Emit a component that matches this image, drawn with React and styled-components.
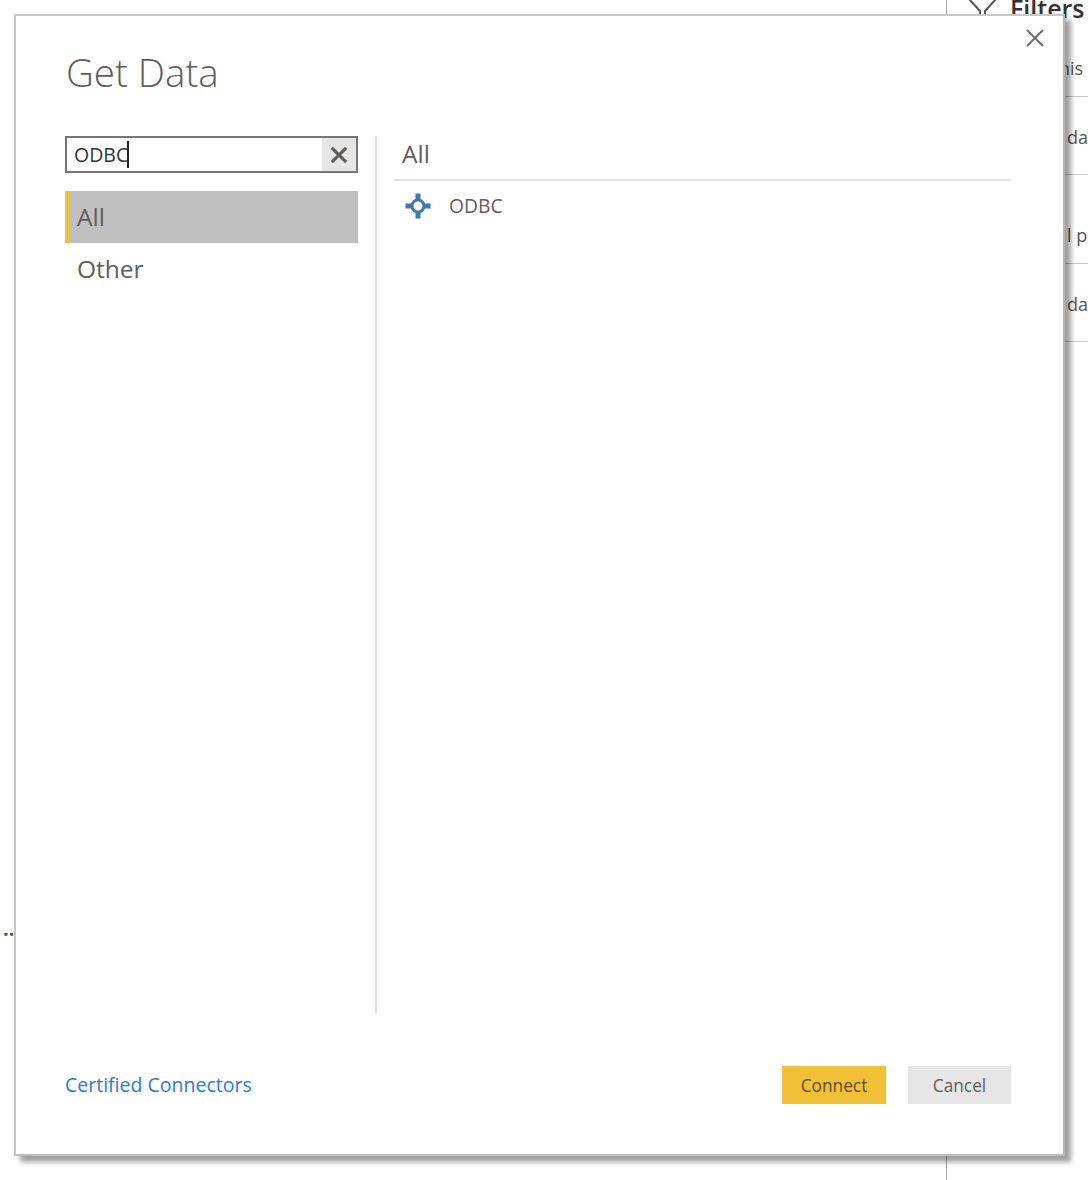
import React from 'react';
import styled, { createGlobalStyle } from 'styled-components';

const GlobalStyle = createGlobalStyle`
  html, body {
    margin: 0;
    padding: 0;
    background: #fff;
  }
  body {
    font-family: "Open Sans", "Noto Sans", "Liberation Sans", sans-serif;
  }
`;

const Page = styled.div`
  position: relative;
  width: 1088px;
  height: 1180px;
  overflow: hidden;
  background: #fff;
  display: flex;
  justify-content: flex-end;
`;

/* report pane that shows behind the dialog */
const FiltersPane = styled.aside`
  width: 141px;
  border-left: 1px solid #a8a8a8;
  color: #444;
`;

const FiltersHeader = styled.div`
  height: 14px;
  display: flex;
  align-items: flex-start;
  gap: 13px;
  padding-left: 21px;
  font-size: 25px;
  font-weight: 600;
  line-height: 20px;
  color: #333;

  svg {
    flex: none;
    margin-top: -2px;
  }
  span {
    margin-top: -2px;
  }
`;

const PaneRow = styled.div`
  height: ${p => p.$height}px;
  box-sizing: border-box;
  border-bottom: 1px solid #c8c8c8;
  padding-left: ${p => p.$left}px;
  padding-bottom: ${p => p.$bottom}px;
  display: flex;
  align-items: flex-end;
  font-size: 18px;
  line-height: 24px;
  color: #555;
  white-space: nowrap;
`;

const MoreDots = styled.span`
  position: absolute;
  left: 3px;
  top: 917px;
  font-size: 20px;
  line-height: 24px;
  font-weight: 700;
  color: #555;
`;

const Dialog = styled.div`
  position: absolute;
  left: 14px;
  top: 14px;
  width: 1051px;
  height: 1142px;
  box-sizing: border-box;
  border: 2px solid #c9c7c5;
  border-right-color: #b4b4b4;
  border-bottom-color: #bdbdbd;
  background: #fff;
  box-shadow: 6px 6px 5px rgba(0, 0, 0, 0.38);
  padding: 0 52px 0 49px;
  display: flex;
  flex-direction: column;
  color: #605e5c;
`;

const CloseButton = styled.button`
  position: absolute;
  right: 17px;
  top: 11px;
  width: 22px;
  height: 22px;
  padding: 0;
  border: 0;
  background: none;
  color: #6e6e6e;
  display: flex;
  align-items: center;
  justify-content: center;
`;

const Title = styled.h1`
  margin: 0;
  padding: 29px 0 0 1px;
  height: 90px;
  box-sizing: border-box;
  font-size: 38.5px;
  line-height: 54px;
  font-weight: 300;
  color: #605e5c;
`;

const Body = styled.div`
  height: 878px;
  margin-top: 30px;
  display: grid;
  grid-template-columns: 312px 1fr;
`;

const Sidebar = styled.div`
  padding-right: 17px;
  border-right: 2px solid #e1e1e1;
`;

const SearchBox = styled.div`
  height: 37px;
  box-sizing: border-box;
  border: 2px solid #757575;
  display: flex;
  align-items: stretch;
  margin-bottom: 18px;
`;

const SearchValue = styled.div`
  flex: 1;
  padding-left: 7px;
  font-size: 19.5px;
  line-height: 33px;
  color: #333;
  display: flex;
  align-items: center;
`;

const Caret = styled.i`
  display: block;
  width: 2px;
  height: 27px;
  margin-left: -1px;
  background: #222;
`;

const ClearButton = styled.button`
  width: 34px;
  padding: 0;
  border: 0;
  background: #e6e6e6;
  color: #605e5c;
  display: flex;
  align-items: center;
  justify-content: center;
`;

const Category = styled.div`
  height: 52px;
  box-sizing: border-box;
  padding-left: ${p => (p.$active ? 8 : 12)}px;
  border-left: ${p => (p.$active ? '4px solid #f2c037' : '0')};
  background: ${p => (p.$active ? '#bfbfbf' : 'transparent')};
  font-size: 24.5px;
  line-height: 52px;
  color: #605e5c;
`;

const Results = styled.div`
  margin-left: 17px;
`;

const ResultsHeader = styled.div`
  height: 45px;
  box-sizing: border-box;
  border-bottom: 2px solid #e1e1e1;
  padding-left: 8px;
  font-size: 24.5px;
  line-height: 36px;
  color: #605e5c;
`;

const ResultRow = styled.div`
  height: 49px;
  display: flex;
  align-items: center;
  gap: 17px;
  padding-left: 10px;
  font-size: 19.3px;
  color: #605e5c;
`;

const Footer = styled.div`
  margin-top: 52px;
  height: 38px;
  display: flex;
  align-items: center;
  justify-content: space-between;
`;

const FooterLink = styled.a`
  font-size: 19.5px;
  line-height: 36px;
  margin: 0 0 1px;
  color: #2b7cd3;
  text-decoration: none;
`;

const Actions = styled.div`
  display: flex;
  gap: 22px;
`;

const ActionButton = styled.button`
  height: 38px;
  width: ${p => p.$width}px;
  padding: 0;
  border: 0;
  font-family: inherit;
  font-size: 17.3px;
  background: ${p => (p.$primary ? '#f2c037' : '#e6e6e6')};
  color: ${p => (p.$primary ? '#5c4a12' : '#605e5c')};
`;

const CrossIcon = ({ size, weight }) => (
  <svg width={size} height={size} viewBox="0 0 20 20" fill="none" stroke="currentColor" strokeWidth={weight}>
    <path d="M2 2L18 18M18 2L2 18" />
  </svg>
);

const ConnectorIcon = () => (
  <svg width="28" height="28" viewBox="0 0 28 28" fill="#3f78ae">
    <path d="M14 6.5a7.5 7.5 0 1 0 0 15a7.5 7.5 0 0 0 0-15zm0 3a4.5 4.5 0 1 1 0 9a4.5 4.5 0 0 1 0-9z" />
    <path d="M11.5 1.5h5v6h-5zM11.5 20.5h5v6h-5zM1.5 11.5h6v5h-6zM20.5 11.5h6v5h-6z" />
  </svg>
);

const FunnelIcon = () => (
  <svg width="29" height="30" viewBox="0 0 29 30" fill="none" stroke="#555" strokeWidth="2">
    <path d="M1 1L12 13V29M28 1L17 13V25" />
  </svg>
);

const App = () => (
  <>
    <GlobalStyle />
    <Page>
      <FiltersPane>
        <FiltersHeader>
          <FunnelIcon />
          <span>Filters</span>
        </FiltersHeader>
        <PaneRow $height={83} $left={112} $bottom={16}>his</PaneRow>
        <PaneRow $height={78} $left={120} $bottom={25}>da</PaneRow>
        <PaneRow $height={89} $left={120} $bottom={16}>l p</PaneRow>
        <PaneRow $height={78} $left={120} $bottom={25}>da</PaneRow>
      </FiltersPane>
      <MoreDots>..</MoreDots>
      <Dialog>
        <CloseButton aria-label="Close">
          <CrossIcon size={20} weight={2} />
        </CloseButton>
        <Title>Get Data</Title>
        <Body>
          <Sidebar>
            <SearchBox>
              <SearchValue>
                ODBC
                <Caret />
              </SearchValue>
              <ClearButton aria-label="Clear">
                <CrossIcon size={18} weight={3.4} />
              </ClearButton>
            </SearchBox>
            <Category $active>All</Category>
            <Category>Other</Category>
          </Sidebar>
          <Results>
            <ResultsHeader>All</ResultsHeader>
            <ResultRow>
              <ConnectorIcon />
              ODBC
            </ResultRow>
          </Results>
        </Body>
        <Footer>
          <FooterLink href="#">Certified Connectors</FooterLink>
          <Actions>
            <ActionButton $primary $width={104}>Connect</ActionButton>
            <ActionButton $width={103}>Cancel</ActionButton>
          </Actions>
        </Footer>
      </Dialog>
    </Page>
  </>
);

export default App;
